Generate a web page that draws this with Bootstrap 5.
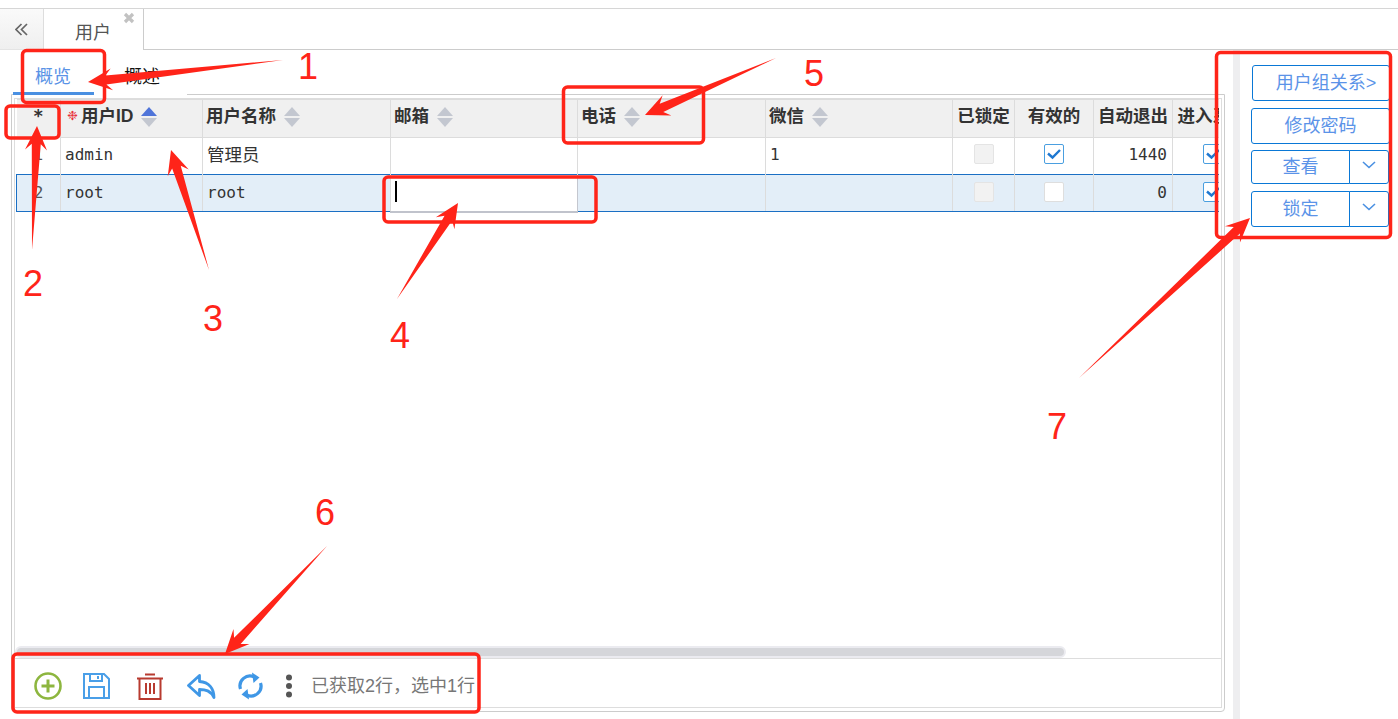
<!DOCTYPE html>
<html lang="zh-CN">
<head>
  <meta charset="UTF-8" />
  <meta name="viewport" content="width=device-width, initial-scale=1.0"/>
  <title>用户</title>
  <link href="https://cdn.jsdelivr.net/npm/bootstrap@5.3.3/dist/css/bootstrap.min.css" rel="stylesheet"/>
  <style>
    body {
      margin: 0;
      background: #fff;
      color: #333;
      font-family: "Liberation Sans", "Noto Sans CJK SC", sans-serif;
      font-size: 18px;
      overflow: hidden;
    }
    .page-wrap { width: 1398px; height: 719px; position: relative; overflow: hidden; }
    .top-gap { height: 9px; border-bottom: 1px solid #d6d6d6; }
    .tab-strip { height: 41px; }
    .collapse-btn {
      width: 44px;
      background: linear-gradient(#fafafa, #efefef);
      border-bottom: 1px solid #e4e4e4;
      border-right: 1px solid #ddd;
      padding: 14px 0 0 15px;
    }
    .collapse-btn svg { display: block; }
    .tab-item {
      width: 100px;
      border-right: 1px solid #ccc;
      color: #555;
      line-height: 1;
      position: relative;
      padding: 15px 0 0 31px;
    }
    .tab-close { position: absolute; left: 79px; top: 3px; }
    .tab-rest { border-bottom: 1px solid #ccc; }
    .work-area { height: 669px; }
    .left-part { width: 1233px; }
    .split-bar { width: 7px; background: #eeeef0; }
    .right-part { width: 158px; padding: 15px 0 0 11px; gap: 7px; }

    .sub-tabs { height: 45px; margin-left: 13px; z-index: 2; }
    .sub-tab { line-height: 1; padding-top: 18px; border-bottom: 3px solid #fff; }
    .sub-tab-on { width: 81px; padding-left: 22px; color: #5a93e6; border-bottom-color: #4a90e2; }
    .sub-tab-off { width: 93px; padding-left: 30px; color: #111; }
    .outer-panel {
      width: 1214px;
      height: 618px;
      margin: -1px 0 0 11px;
      border: 1px solid #ccc;
      border-radius: 0 0 4px 4px;
      padding: 3px 2px;
    }
    .inner-panel { height: 100%; border: 1px solid #ddd; }
    .grid-box { flex: 1 1 auto; margin: 0 2px 0 0; padding-left: 1px; overflow: hidden; min-height: 0; }
    .data-grid {
      table-layout: fixed;
      width: 1236px;
      margin: 0;
      --bs-table-border-color: #dcdcdc;
      --bs-table-bg: #fff;
      --bs-table-color: #333;
    }
    .data-grid th {
      --bs-table-bg: #f0f0f0;
      height: 38px;
      padding: 0 3px 3px;
      font-size: 17.5px;
      font-weight: 700;
      line-height: 1;
      vertical-align: middle;
      white-space: nowrap;
      overflow: hidden;
      border-top-width: 0;
      color: #333;
    }
    .data-grid td {
      height: 37px;
      padding: 0 4px 2px;
      font-family: "DejaVu Sans Mono", "Noto Sans CJK SC", monospace;
      font-size: 16px;
      line-height: 1;
      vertical-align: middle;
      overflow: hidden;
    }
    .data-grid tr.row-on > td { padding-bottom: 0; }
    .data-grid th:first-child, .data-grid td:first-child { border-left-width: 0; }
    .data-grid tr.row-on > td {
      --bs-table-bg: #e3eef8;
      border-top: 1px solid #1a6fc4;
      border-bottom: 1px solid #1a6fc4;
    }
    .data-grid tr.row-on > td:first-child { border-left: 1px solid #1a6fc4; }
    .data-grid td.cell-no { text-align: center; color: #555; }
    .data-grid td.cell-num { text-align: right; padding-right: 5px; }
    .data-grid td.cell-check { text-align: center; padding-left: 0; padding-right: 0; }
    .data-grid tr.row-on > td.cell-edit { --bs-table-bg: #fff; padding: 0; border-right: 1px solid #c4c7cf; border-bottom: 2px solid #c0c3cc; }
    .han-text { font-family: "Noto Sans CJK SC", sans-serif; font-size: 17.5px; vertical-align: 1px; }
    .edit-caret { display: block; width: 2px; height: 21px; margin: 0 0 2px 4px; background: #000; }
    .req-mark { color: #e8323c; font-family: "DejaVu Sans", sans-serif; font-size: 13px; font-weight: 400; margin: 0 3px 0 3px; vertical-align: 2px; }
    .sort-mark { display: inline-block; vertical-align: middle; margin-left: 8px; }
    .head-star { text-align: center; font-family: "DejaVu Sans Mono", monospace; }
    .tick-box {
      display: inline-block;
      width: 20px;
      height: 20px;
      margin-bottom: 3px;
      vertical-align: middle;
      background: #fff;
      border: 1px solid #dedede;
      border-radius: 2px;
    }
    .tick-off { background: #f2f2f2; border-color: #e4e4e4; }
    .tick-on { border: 1px solid #4a9fe0; }
    .tick-on svg { display: block; }

    .h-scroll { height: 12px; flex: none; }
    .h-thumb { width: 1051px; height: 12px; background: #d5d6da; border: 2px solid #ebebf0; border-radius: 6px; }
    .tool-row {
      flex: none;
      height: 49px;
      border-top: 1px solid #ddd;
      padding: 6px 0 0 8px;
      display: grid;
      grid-template-columns: 49px 49px 57px 46px 53px 24px auto;
      align-items: center;
      justify-items: center;
    }
    .tool-text { justify-self: start; padding-left: 10px; color: #777; white-space: nowrap; line-height: 1; }

    .side-btn {
      --bs-btn-color: #5b93e8;
      --bs-btn-border-color: #0a78d6;
      --bs-btn-border-radius: 3px;
      --bs-btn-font-size: 18px;
      --bs-btn-line-height: 1;
      --bs-btn-padding-y: 0;
      --bs-btn-padding-x: 0;
      --bs-btn-bg: #fff;
      height: 36px;
      width: 139px;
    }
    .side-first { margin-left: 1px; width: 138px; padding-left: 10px; height: 36px; }
    .side-group { width: 139px; height: 34px; margin-top: -1px; }
    .side-group-low { height: 36px; margin-top: 0; }
    .side-group .side-btn { height: auto; }
    .side-main { width: 99px; flex: none !important; }
    .side-drop { width: 40px; flex: none !important; }
    .side-drop svg { display: block; margin: -4px auto 0; }

    .note-layer { position: absolute; left: 0; top: 0; z-index: 10; pointer-events: none; }
    .note-layer rect { fill: none; stroke: #ff2419; stroke-width: 3.5; }
    .note-layer polygon { fill: #ff2419; }
    .note-layer text { fill: #ff2419; font-family: "Liberation Sans", sans-serif; font-size: 36px; }
  </style>
</head>
<body>

<div class="page-wrap">
  <div class="top-gap"></div>

  <div class="tab-strip d-flex">
    <div class="collapse-btn"><svg width="13" height="13" viewBox="0 0 13 13"><path d="M6.500 1L1 6.500 6.500 12M12 1L6.500 6.500 12 12" fill="none" stroke="#666" stroke-width="1.700"/></svg></div>
    <div class="tab-item">
      用户
      <svg class="tab-close" width="12" height="12" viewBox="0 0 12 12"><path d="M2 2l8 8M10 2l-8 8" stroke="#c2c2c2" stroke-width="3.2" fill="none"/></svg>
    </div>
    <div class="tab-rest flex-grow-1"></div>
  </div>

  <div class="work-area d-flex">
    <div class="left-part">
      <div class="sub-tabs d-flex position-relative">
        <div class="sub-tab sub-tab-on">概览</div>
        <div class="sub-tab sub-tab-off">概述</div>
      </div>
      <div class="outer-panel">
        <div class="inner-panel d-flex flex-column">
          <div class="grid-box">
            <table class="table table-bordered data-grid">
              <colgroup>
                <col width="44"><col width="142"><col width="188"><col width="187"><col width="188">
                <col width="187"><col width="62"><col width="79"><col width="79"><col width="80">
              </colgroup>
              <thead>
                <tr>
                  <th class="head-star">*</th>
                  <th><span class="req-mark">❉</span>用户ID<svg class="sort-mark" width="16" height="20" viewBox="0 0 16 20"><path d="M8 0l8 9H0z" fill="#4f74d9"/><path d="M8 20l8-9H0z" fill="#c3c7d0"/></svg></th>
                  <th>用户名称<svg class="sort-mark" width="16" height="20" viewBox="0 0 16 20"><path d="M8 0l8 9H0z" fill="#c3c7d0"/><path d="M8 20l8-9H0z" fill="#c3c7d0"/></svg></th>
                  <th>邮箱<svg class="sort-mark" width="16" height="20" viewBox="0 0 16 20"><path d="M8 0l8 9H0z" fill="#c3c7d0"/><path d="M8 20l8-9H0z" fill="#c3c7d0"/></svg></th>
                  <th>电话<svg class="sort-mark" width="16" height="20" viewBox="0 0 16 20"><path d="M8 0l8 9H0z" fill="#c3c7d0"/><path d="M8 20l8-9H0z" fill="#c3c7d0"/></svg></th>
                  <th>微信<svg class="sort-mark" width="16" height="20" viewBox="0 0 16 20"><path d="M8 0l8 9H0z" fill="#c3c7d0"/><path d="M8 20l8-9H0z" fill="#c3c7d0"/></svg></th>
                  <th class="text-center">已锁定</th>
                  <th class="text-center">有效的</th>
                  <th class="text-center">自动退出</th>
                  <th class="text-center">进入系统</th>
                </tr>
              </thead>
              <tbody>
                <tr>
                  <td class="cell-no">1</td>
                  <td>admin</td>
                  <td><span class="han-text">管理员</span></td>
                  <td></td>
                  <td></td>
                  <td>1</td>
                  <td class="cell-check"><span class="tick-box tick-off"></span></td>
                  <td class="cell-check"><span class="tick-box tick-on"><svg width="18" height="18" viewBox="0 0 18 18"><path d="M3 8.500l4.500 4 7.500-7.500" stroke="#1f78d1" stroke-width="2.400" fill="none"/></svg></span></td>
                  <td class="cell-num">1440</td>
                  <td class="cell-check"><span class="tick-box tick-on"><svg width="18" height="18" viewBox="0 0 18 18"><path d="M3 8.500l4.500 4 7.500-7.500" stroke="#1f78d1" stroke-width="2.400" fill="none"/></svg></span></td>
                </tr>
                <tr class="row-on">
                  <td class="cell-no">2</td>
                  <td>root</td>
                  <td>root</td>
                  <td class="cell-edit"><span class="edit-caret"></span></td>
                  <td></td>
                  <td></td>
                  <td class="cell-check"><span class="tick-box tick-off"></span></td>
                  <td class="cell-check"><span class="tick-box"></span></td>
                  <td class="cell-num">0</td>
                  <td class="cell-check"><span class="tick-box tick-on"><svg width="18" height="18" viewBox="0 0 18 18"><path d="M3 8.500l4.500 4 7.500-7.500" stroke="#1f78d1" stroke-width="2.400" fill="none"/></svg></span></td>
                </tr>
              </tbody>
            </table>
          </div>
          <div class="h-scroll"><div class="h-thumb"></div></div>
          <div class="tool-row">
            <svg width="28" height="28" viewBox="0 0 28 28"><circle cx="14" cy="14" r="12.500" fill="none" stroke="#8db63f" stroke-width="2.600"/><path d="M14 7.500v13M7.500 14h13" stroke="#8db63f" stroke-width="3" fill="none"/></svg>
            <svg width="27" height="26" viewBox="0 0 27 26"><path d="M1 1h20l5 5v19H1z" fill="none" stroke="#4a9fe8" stroke-width="2"/><path d="M7 1v7h12V1M15 3v3M6 25V14h15v11" fill="none" stroke="#4a9fe8" stroke-width="2"/></svg>
            <svg width="26" height="27" viewBox="0 0 26 27"><path d="M8 1.500h10M0 5.500h26" stroke="#b83b30" stroke-width="2" fill="none"/><path d="M2.500 6v20h21V6" fill="none" stroke="#b83b30" stroke-width="2"/><path d="M9 10v11M13 10v11M17 10v11" stroke="#b83b30" stroke-width="2" fill="none"/></svg>
            <svg width="29" height="25" viewBox="0 0 29 25"><path d="M12.500 1.500L1.500 11.500l11 10v-6c6 0 11 1 14.500 8 0-9-5-15.500-14.500-16z" fill="none" stroke="#3f97e6" stroke-width="2.800" stroke-linejoin="round"/></svg>
            <svg width="25" height="28" viewBox="0 0 25 28"><path d="M2.500 17a10 10 0 0 1 14-12" fill="none" stroke="#3f97e6" stroke-width="3.200"/><path d="M14 .5l7.500 5-6 5.500z" fill="#3f97e6"/><path d="M22.500 11a10 10 0 0 1-14 12" fill="none" stroke="#3f97e6" stroke-width="3.200"/><path d="M11 27.500l-7.500-5 6-5.500z" fill="#3f97e6"/></svg>
            <svg width="8" height="24" viewBox="0 0 8 24"><circle cx="4" cy="3.500" r="3" fill="#555"/><circle cx="4" cy="12" r="3" fill="#555"/><circle cx="4" cy="20.500" r="3" fill="#555"/></svg>
            <div class="tool-text">已获取2行，选中1行</div>
          </div>
        </div>
      </div>
    </div>

    <div class="split-bar"></div>

    <div class="right-part d-flex flex-column">
      <button type="button" class="btn side-btn side-first">用户组关系&gt;</button>
      <button type="button" class="btn side-btn">修改密码</button>
      <div class="btn-group side-group">
        <button type="button" class="btn side-btn side-main">查看</button>
        <button type="button" class="btn side-btn side-drop"><svg width="14" height="8" viewBox="0 0 14 8"><path d="M1 1l6 5.500L13 1" stroke="#4a90e2" stroke-width="1.600" fill="none"/></svg></button>
      </div>
      <div class="btn-group side-group side-group-low">
        <button type="button" class="btn side-btn side-main">锁定</button>
        <button type="button" class="btn side-btn side-drop"><svg width="14" height="8" viewBox="0 0 14 8"><path d="M1 1l6 5.500L13 1" stroke="#4a90e2" stroke-width="1.600" fill="none"/></svg></button>
      </div>
    </div>
  </div>

  <!-- annotations drawn on top of the screenshot -->
  <svg class="note-layer" id="noteLayer" width="1398" height="719" viewBox="0 0 1398 719">
    <rect x="22.500" y="50.500" width="82" height="52" rx="4"/>
    <rect x="6" y="106" width="53" height="32" rx="4"/>
    <rect x="384" y="177" width="212" height="45" rx="4"/>
    <rect x="563.500" y="87" width="140" height="56" rx="4"/>
    <rect x="13" y="654" width="466" height="58" rx="4"/>
    <rect x="1216.500" y="52.500" width="174" height="185" rx="4"/>

    <text x="298" y="79">1</text>
    <text x="23" y="296">2</text>
    <text x="203" y="331">3</text>
    <text x="390" y="348">4</text>
    <text x="804" y="86">5</text>
    <text x="315" y="525">6</text>
    <text x="1047" y="439">7</text>
  </svg>
</div>

<script>
  // tail x,y then tip x,y of each hand-drawn red arrow
  const arrows = [
    [283, 60, 88, 82],
    [32, 250, 37, 126],
    [209, 270, 171, 150],
    [397, 299, 458, 203],
    [776, 58, 645, 115],
    [327, 546, 225, 654],
    [1079, 378, 1250, 218]
  ];
  const layer = document.getElementById("noteLayer");
  arrows.forEach(([x1, y1, x2, y2]) => {
    const len = Math.hypot(x2 - x1, y2 - y1);
    const ux = (x2 - x1) / len, uy = (y2 - y1) / len;
    const nx = -uy, ny = ux;
    // neck sits a bit behind the head, barbs stick out past it
    const at = (back, side) => `${x2 - ux * back + nx * side},${y2 - uy * back + ny * side}`;
    const pts = [`${x1},${y1}`, at(18, 4.5), at(24, 11), `${x2},${y2}`, at(24, -11), at(18, -4.5)];
    const poly = document.createElementNS("http://www.w3.org/2000/svg", "polygon");
    poly.setAttribute("points", pts.join(" "));
    layer.appendChild(poly);
  });
</script>
<script src="https://cdn.jsdelivr.net/npm/bootstrap@5.3.3/dist/js/bootstrap.bundle.min.js"></script>
</body>
</html>
